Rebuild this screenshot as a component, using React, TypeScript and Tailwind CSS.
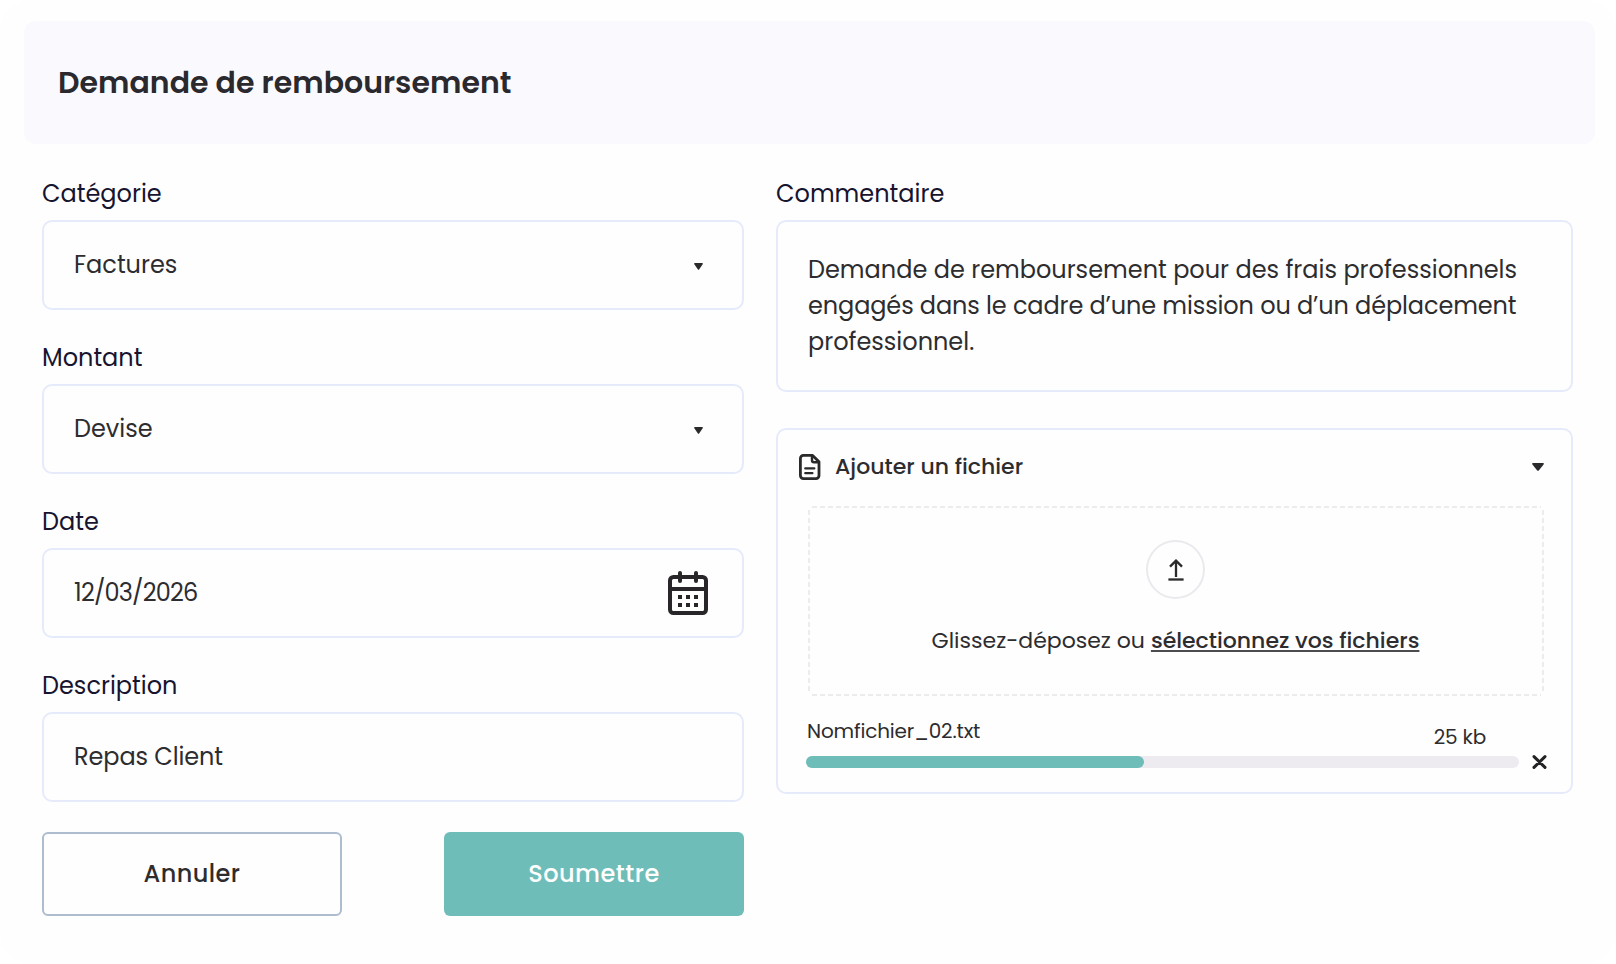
import type { ReactNode } from "react";

function Caret({ className }: { className: string }) {
  return (
    <svg viewBox="0 0 12 8" preserveAspectRatio="none" className={className} fill="#2a292b">
      <path d="M1 0H11Q12.4 0 11.6 1.4L7 7.2Q6 8.5 5 7.2L0.4 1.4Q-0.4 0 1 0Z" />
    </svg>
  );
}

function CalendarIcon() {
  return (
    <svg width="40" height="44" viewBox="0 0 40 44" fill="none" stroke="#282628" className="mt-px">
      <rect x="2" y="6" width="36" height="36" rx="3.5" strokeWidth="4" />
      <path d="M2 18H38" strokeWidth="4" />
      <path d="M12 2V10M28 2V10" strokeWidth="4" strokeLinecap="round" />
      <path d="M10 26H30M10 34H30" strokeWidth="4" strokeDasharray="4 4" />
    </svg>
  );
}

function FileIcon() {
  return (
    <svg width="22" height="26" viewBox="0 0 22 26" fill="none" stroke="#2a292b" strokeWidth="2.8" strokeLinejoin="round">
      <path d="M13.6 1.4H4.4A3 3 0 0 0 1.4 4.4V21.6A3 3 0 0 0 4.4 24.6H17A3 3 0 0 0 20 21.6V7.8Z" />
      <path d="M13 1.6V6.2A2 2 0 0 0 15 8.2H19.8" strokeWidth="2.4" />
      <path d="M6.3 14.4H15.3M6.3 19.2H13.4" strokeWidth="2.3" strokeLinecap="round" />
    </svg>
  );
}

function Field({ label, children }: { label: string; children: ReactNode }) {
  return (
    <div className="flex flex-col gap-2">
      <div className="pt-px text-2xl leading-9 text-[#171430]">{label}</div>
      <div className="flex h-[90px] items-center justify-between rounded-[10px] border-2 border-[#e6ebfb] pr-[34px] pb-px pl-[30px] text-2xl">
        {children}
      </div>
    </div>
  );
}

export default function App() {
  return (
    <div className="h-[964px] w-[1616px] overflow-hidden rounded-[32px] bg-[#fefefe] pt-[21px] font-['Poppins','Inter',sans-serif] text-[#2d2c2f]">
      <header className="mr-[21px] ml-6 flex h-[123px] items-center rounded-xl bg-[#faf9fe] pl-[34px]">
        <h1 className="text-[30px] font-semibold text-[#2a292e]">Demande de remboursement</h1>
      </header>

      <main className="mt-[31px] flex gap-8 pl-[42px]">
        <section className="flex w-[702px] flex-col gap-[29px]">
          <Field label="Catégorie">
            <span>Factures</span>
            <Caret className="mt-1 mr-[5px] h-[7px] w-[9px]" />
          </Field>
          <Field label="Montant">
            <span>Devise</span>
            <Caret className="mt-1 mr-[5px] h-[7px] w-[9px]" />
          </Field>
          <Field label="Date">
            <span className="tracking-[-0.8px]">12/03/2026</span>
            <CalendarIcon />
          </Field>
          <Field label="Description">
            <span className="tracking-[-0.1px]">Repas Client</span>
          </Field>
          <div className="mt-px flex justify-between text-2xl font-medium">
            <button className="h-[84px] w-[300px] rounded-md border-2 border-[#aebccf] pb-px tracking-[0.45px]">Annuler</button>
            <button className="h-[84px] w-[300px] rounded-md bg-[#6fbdb9] pb-px tracking-[0.5px] text-white">Soumettre</button>
          </div>
        </section>

        <section className="flex w-[797px] flex-col">
          <div className="pt-px text-2xl leading-9 text-[#171430]">Commentaire</div>
          <div className="mt-2 h-[172px] rounded-[10px] border-2 border-[#e6ebfb] pt-[30px] pl-[30px] text-2xl leading-9 whitespace-nowrap">
            <p>Demande de remboursement pour des frais professionnels</p>
            <p className="tracking-[-0.11px]">engagés dans le cadre d’une mission ou d’un déplacement</p>
            <p>professionnel.</p>
          </div>

          <div className="mt-9 flex h-[366px] flex-col rounded-[10px] border-2 border-[#e6ebfb] pt-6 pr-[27px] pl-[21px]">
            <div className="flex h-[26px] items-center">
              <FileIcon />
              <span className="ml-[14px] pb-px text-[22px] leading-[26px] font-medium">Ajouter un fichier</span>
              <Caret className="ml-auto h-2 w-3" />
            </div>

            <div className="relative mt-[26px] ml-[9px] flex h-[190px] w-[736px] flex-col items-center pt-[34px]">
              <svg className="absolute inset-0" width="736" height="190" fill="none" stroke="#ececed" strokeWidth="2">
                <path d="M4 1H733M4 189H733M1 4V187M735 4V187" strokeDasharray="5 3" />
              </svg>
              <div className="mr-px flex size-[59px] items-center justify-center rounded-full border-2 border-[#ece9ee]">
                <svg width="16" height="22" viewBox="0 0 16 22" fill="none" stroke="#2a292b" strokeWidth="2.3">
                  <path d="M8 18V1.5M2 7.6L8 1.6L14 7.6" />
                  <path d="M0.4 20.5H15.6" />
                </svg>
              </div>
              <p className="mt-[25px] mr-px flex gap-[6px] text-[22px] leading-[33px]">
                <span>Glissez-déposez ou</span>
                <a className="font-medium underline decoration-[#4d4b50] decoration-[1.5px] underline-offset-[2px] [text-decoration-skip-ink:none]">sélectionnez vos fichiers</a>
              </p>
            </div>

            <div className="ml-[7px] flex items-end gap-[13px]">
              <div className="flex w-[713px] shrink-0 flex-col">
                <div className="flex h-[60px] justify-between pr-[33px] pl-px text-xl leading-[30px]">
                  <span className="pt-5 tracking-[-0.15px]">Nomfichier_02.txt</span>
                  <span className="pt-[26px] tracking-[-0.2px]">25 kb</span>
                </div>
                <div className="h-3 rounded-full bg-[#edebf0]">
                  <div className="h-3 w-[338px] rounded-full bg-[#6fbdb9]" />
                </div>
              </div>
              <svg width="15" height="14" viewBox="0 0 15 14" stroke="#232225" strokeWidth="3" strokeLinecap="round" className="mb-[-1px] shrink-0">
                <path d="M2 1.6L13 12.4M13 1.6L2 12.4" />
              </svg>
            </div>
          </div>
        </section>
      </main>
    </div>
  );
}
